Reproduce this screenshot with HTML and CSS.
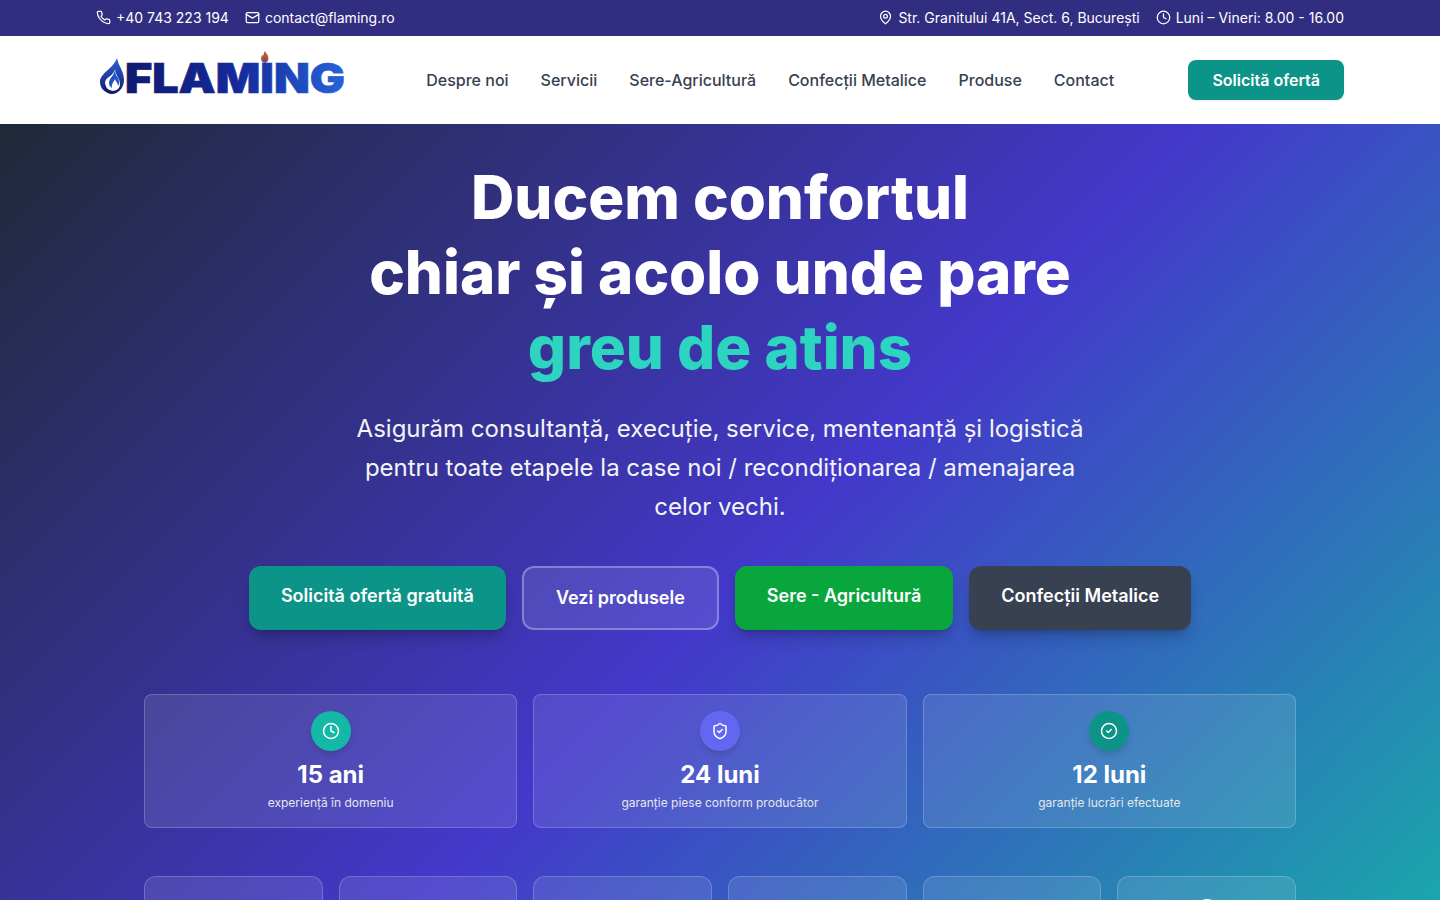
FILE: index.html
```html
<!DOCTYPE html>
<html lang="ro">
<head>
<meta charset="utf-8">
<title>Flaming</title>
<link rel="stylesheet" href="styles.css">
</head>
<body>

<!-- Top bar -->
<div class="topbar">
    <div class="container topbar-row">
        <div class="topbar-group">
            <span class="topbar-item">
                <svg class="ico" viewBox="0 0 24 24"><path d="M22 16.92v3a2 2 0 0 1-2.18 2 19.79 19.79 0 0 1-8.63-3.07 19.5 19.5 0 0 1-6-6 19.79 19.79 0 0 1-3.07-8.67A2 2 0 0 1 4.11 2h3a2 2 0 0 1 2 1.72c.13.96.36 1.9.7 2.81a2 2 0 0 1-.45 2.11L8.09 9.91a16 16 0 0 0 6 6l1.27-1.27a2 2 0 0 1 2.11-.45c.91.34 1.85.57 2.81.7A2 2 0 0 1 22 16.92z"/></svg>
                +40 743 223 194
            </span>
            <span class="topbar-item">
                <svg class="ico" viewBox="0 0 24 24"><rect x="2" y="4" width="20" height="16" rx="2"/><path d="m22 7-10 6L2 7"/></svg>
                contact@flaming.ro
            </span>
        </div>
        <div class="topbar-group">
            <span class="topbar-item">
                <svg class="ico" viewBox="0 0 24 24"><path d="M20 10c0 6-8 12-8 12s-8-6-8-12a8 8 0 0 1 16 0z"/><circle cx="12" cy="10" r="3"/></svg>
                Str. Granitului 41A, Sect. 6, București
            </span>
            <span class="topbar-item">
                <svg class="ico" viewBox="0 0 24 24"><circle cx="12" cy="12" r="10"/><path d="M12 6v6l4 2"/></svg>
                Luni – Vineri: 8.00 - 16.00
            </span>
        </div>
    </div>
</div>

<!-- Header -->
<header class="header">
    <div class="container header-row">
        <a class="logo" href="#">
            <svg width="250" height="60" viewBox="0 0 250 60">
                <defs>
                    <linearGradient id="logoText" gradientUnits="userSpaceOnUse" x1="25" y1="0" x2="245" y2="0">
                        <stop offset="0" stop-color="#101a6e"/>
                        <stop offset="0.5" stop-color="#14299a"/>
                        <stop offset="1" stop-color="#2563d8"/>
                    </linearGradient>
                    <linearGradient id="logoDrop" x1="0" y1="0" x2="0" y2="1">
                        <stop offset="0" stop-color="#2f62d4"/>
                        <stop offset="1" stop-color="#0f1c72"/>
                    </linearGradient>
                </defs>
                <!-- drop -->
                <path fill="url(#logoDrop)" d="M17 8c1 7 7 13 7 22 0 3-1 6-2.5 8.5C18 43 14 44.5 11 44 5 43 0 38 0 32c0-9 13-13 17-24z"/>
                <path fill="#fff" d="M15 19c0 6 5 9 5 15 0 4-3 7-7 7-4 0-8-3-8-8 0-6 9-7 10-14z"/>
                <path fill="#2352c8" d="M15 20c-1 6-6 8-6 13 0 2 1 4 3 5-1-4 2-6 3-9 1 3 3 4 3 7 2-2 1-5 0-8-2-2-3-5-3-8z"/>
                <path fill="#0f1c72" d="M5 33c0 5 4 8 8 8 3 0 6-1 8-4-1 4-5 6-9 6-5 0-9-4-7-10z"/>
                <text class="logo-text" x="25" y="43" textLength="220" lengthAdjust="spacingAndGlyphs" fill="url(#logoText)" stroke="url(#logoText)">FLAMING</text>
                <!-- flame over the I -->
                <path fill="#c8502c" d="M165 1c.5 2 3.5 4 3.5 7.5 0 2.5-1.8 4.5-3.8 4.5s-3.7-2-3.7-4.5c0-1.8 1-2.5 1.5-3.7.5.6 1 .9 1 .9 0-1.5.5-3.2 1.5-4.7z"/>
                <path fill="#3a5fb0" d="M164.8 7c.8 1 1.7 1.8 1.7 3.2 0 1.3-.8 2.3-1.8 2.3s-1.8-1-1.8-2.3c0-1.4 1.3-1.8 1.9-3.2z"/>
            </svg>
        </a>
        <nav class="nav">
            <a href="#">Despre noi</a>
            <a href="#">Servicii</a>
            <a href="#">Sere-Agricultură</a>
            <a href="#">Confecții Metalice</a>
            <a href="#">Produse</a>
            <a href="#">Contact</a>
        </nav>
        <a class="header-cta" href="#">Solicită ofertă</a>
    </div>
</header>

<!-- Hero -->
<section class="hero">
    <h1 class="hero-title">Ducem confortul<br>chiar și acolo unde pare<br><span class="accent">greu de atins</span></h1>
    <p class="hero-lead">Asigurăm consultanță, execuție, service, mentenanță și logistică pentru toate etapele la case noi / recondiționarea / amenajarea celor vechi.</p>

    <div class="hero-buttons">
        <a class="btn btn-teal" href="#">Solicită ofertă gratuită</a>
        <a class="btn btn-ghost" href="#">Vezi produsele</a>
        <a class="btn btn-green" href="#">Sere - Agricultură</a>
        <a class="btn btn-dark" href="#">Confecții Metalice</a>
    </div>

    <div class="stats">
        <div class="stat">
            <div class="stat-icon icon-teal">
                <svg class="ico" viewBox="0 0 24 24"><circle cx="12" cy="12" r="10"/><path d="M12 6v6l4 2"/></svg>
            </div>
            <div class="stat-value">15 ani</div>
            <div class="stat-label">experiență în domeniu</div>
        </div>
        <div class="stat">
            <div class="stat-icon icon-indigo">
                <svg class="ico" viewBox="0 0 24 24"><path d="M20 13c0 5-3.5 7.5-7.66 8.95a1 1 0 0 1-.67-.01C7.5 20.5 4 18 4 13V6a1 1 0 0 1 1-1c2 0 4.5-1.2 6.24-2.72a1.17 1.17 0 0 1 1.52 0C14.51 3.81 17 5 19 5a1 1 0 0 1 1 1z"/><path d="m9 12 2 2 4-4"/></svg>
            </div>
            <div class="stat-value">24 luni</div>
            <div class="stat-label">garanție piese conform producător</div>
        </div>
        <div class="stat">
            <div class="stat-icon icon-green">
                <svg class="ico" viewBox="0 0 24 24"><circle cx="12" cy="12" r="10"/><path d="m9 12 2 2 4-4"/></svg>
            </div>
            <div class="stat-value">12 luni</div>
            <div class="stat-label">garanție lucrări efectuate</div>
        </div>
    </div>

    <div class="features">
        <div class="feature"></div>
        <div class="feature"></div>
        <div class="feature"></div>
        <div class="feature"></div>
        <div class="feature"></div>
        <div class="feature">
            <svg class="feature-icon" viewBox="0 0 24 24"><circle cx="12" cy="12" r="10"/></svg>
        </div>
    </div>
</section>

</body>
</html>
```

FILE: styles.css
```css
* {
    box-sizing: border-box;
}

html, body {
    height: 100%;
}

body {
    margin: 0;
    font-family: Inter, "Liberation Sans", sans-serif;
    overflow: hidden;
}

a {
    text-decoration: none;
    color: inherit;
}

.container {
    width: 1280px;
    margin: 0 auto;
    padding: 0 16px;
}

.ico {
    width: 15px;
    height: 15px;
    fill: none;
    stroke: currentColor;
    stroke-width: 2;
    stroke-linecap: round;
    stroke-linejoin: round;
    flex: none;
}

/* Top bar */
.topbar {
    background: #312e81;
    color: #fff;
    font-size: 14px;
}

.topbar-row {
    height: 36px;
    padding-bottom: 2px;
    display: flex;
    align-items: center;
    justify-content: space-between;
}

.topbar-group {
    display: flex;
    gap: 16px;
}

.topbar-item {
    display: flex;
    align-items: center;
    gap: 5px;
}

/* Header */
.header {
    background: #fff;
}

.header-row {
    height: 88px;
    display: flex;
    align-items: center;
    justify-content: space-between;
}

.logo {
    display: block;
    height: 60px;
    margin-left: 4px;
}

.logo-text {
    font-family: Inter, "Liberation Sans", sans-serif;
    font-weight: 900;
    font-size: 41px;
    stroke-width: 0.7;
}

.nav {
    display: flex;
    gap: 32px;
    font-size: 16px;
    font-weight: 500;
    color: #374151;
    margin-left: 2px;
}

.header-cta {
    background: #0d9488;
    color: #fff;
    font-size: 16px;
    font-weight: 600;
    padding: 0 24px;
    height: 40px;
    line-height: 40px;
    border-radius: 8px;
    box-shadow: 0 1px 2px rgba(0, 0, 0, 0.08);
}

/* Hero */
.hero {
    height: 950px;
    padding-top: 36px;
    color: #fff;
    text-align: center;
    background: linear-gradient(135deg, #1f2937 0%, #4338ca 50%, #14b8a6 100%);
}

.hero-title {
    margin: 0 0 24px;
    font-size: 60px;
    line-height: 75px;
    font-weight: 800;
}

.accent {
    color: #2dd4bf;
}

.hero-lead {
    width: 768px;
    margin: 0 auto 40px;
    font-size: 24px;
    line-height: 39px;
    color: #f3f4f6;
}

.hero-buttons {
    display: flex;
    justify-content: center;
    gap: 16px;
    margin-bottom: 64px;
}

.btn {
    display: block;
    height: 64px;
    padding: 16px 32px;
    border-radius: 12px;
    font-size: 18px;
    line-height: 28px;
    font-weight: 600;
    box-shadow: 0 10px 15px -3px rgba(0, 0, 0, 0.2), 0 4px 6px -4px rgba(0, 0, 0, 0.2);
}

.btn-teal {
    background: #0d9488;
}

.btn-ghost {
    background: rgba(255, 255, 255, 0.1);
    border: 2px solid rgba(255, 255, 255, 0.3);
    box-shadow: none;
}

.btn-green {
    background: #09a63d;
}

.btn-dark {
    background: #374151;
}

/* Stats */
.stats {
    width: 1152px;
    margin: 0 auto 48px;
    display: grid;
    grid-template-columns: repeat(3, 1fr);
    gap: 16px;
}

.stat {
    height: 134px;
    padding-top: 16px;
    background: rgba(255, 255, 255, 0.1);
    border: 1px solid rgba(255, 255, 255, 0.2);
    border-radius: 8px;
}

.stat-icon {
    width: 40px;
    height: 40px;
    margin: 0 auto 8px;
    border-radius: 50%;
    display: flex;
    align-items: center;
    justify-content: center;
    box-shadow: 0 4px 6px -1px rgba(0, 0, 0, 0.15);
}

.stat-icon .ico {
    width: 18px;
    height: 18px;
}

.icon-teal {
    background: #14b8a6;
}

.icon-indigo {
    background: #6366f1;
}

.icon-green {
    background: #0d9488;
}

.stat-value {
    font-size: 24px;
    line-height: 32px;
    font-weight: 700;
    margin-bottom: 4px;
}

.stat-label {
    font-size: 12px;
    line-height: 16px;
    color: #e5e7eb;
}

/* Feature cards */
.features {
    width: 1152px;
    margin: 0 auto;
    display: grid;
    grid-template-columns: repeat(6, 1fr);
    gap: 16px;
}

.feature {
    height: 140px;
    padding-top: 21px;
    background: rgba(255, 255, 255, 0.1);
    border: 1px solid rgba(255, 255, 255, 0.2);
    border-radius: 12px;
}

.feature-icon {
    display: block;
    width: 24px;
    height: 24px;
    margin: 0 auto;
    fill: none;
    stroke: #fff;
    stroke-width: 2;
}
```
